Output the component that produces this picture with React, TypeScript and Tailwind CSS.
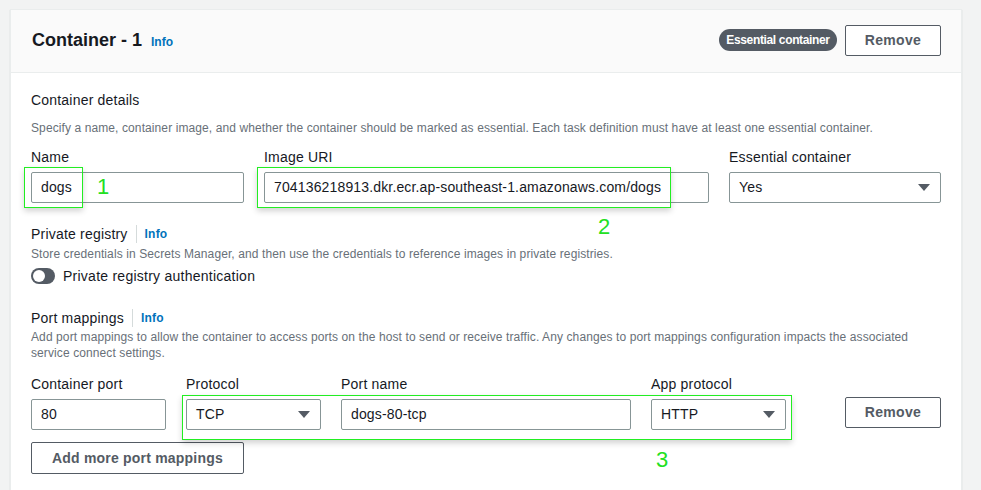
import React from 'react';

const font = { fontFamily: '"Liberation Sans", Arial, sans-serif' };

function Caret() {
  return (
    <svg width="12" height="7" viewBox="0 0 12 7" className="shrink-0">
      <path d="M0 0 H12 L6 7 Z" fill="#545b64" />
    </svg>
  );
}

function Label({ children }: { children: React.ReactNode }) {
  return <div className="text-[14px] leading-[20px] tracking-[0.2px] text-[#16191f] mb-[5px]">{children}</div>;
}

function TextBox({ value, className = '' }: { value: string; className?: string }) {
  return (
    <div
      className={`h-[31px] border border-[#879596] rounded-[2px] bg-white flex items-center px-[9px] text-[14px] tracking-[0.15px] text-[#16191f] ${className}`}
    >
      {value}
    </div>
  );
}

function SelectBox({ value, className = '' }: { value: string; className?: string }) {
  return (
    <div
      className={`h-[31px] border border-[#879596] rounded-[2px] bg-white flex items-center justify-between pl-[9px] pr-[10px] text-[14px] tracking-[0.2px] text-[#16191f] ${className}`}
    >
      <span>{value}</span>
      <Caret />
    </div>
  );
}

function InfoLink() {
  return <span className="text-[12px] font-bold text-[#0073bb]">Info</span>;
}

function SectionHeading({ title }: { title: string }) {
  return (
    <div className="flex items-center text-[14px] leading-[20px] tracking-[0.2px] text-[#16191f]">
      <span>{title}</span>
      <span className="mx-[8px] h-[18px] w-px bg-[#d5dbdb]" />
      <InfoLink />
    </div>
  );
}

function Marker({ n, className }: { n: string; className: string }) {
  return <span className={`absolute text-[22px] leading-none text-[#22e022] ${className}`}>{n}</span>;
}

function Highlight({ className }: { className: string }) {
  return (
    <div
      className={`absolute border border-[#22ee22] shadow-[0_3px_6px_rgba(0,0,0,0.18)] pointer-events-none ${className}`}
    />
  );
}

export default function App() {
  return (
    <div style={font} className="w-[981px] h-[490px] overflow-hidden bg-[#f2f3f3] pt-[9px] pl-[10px]">
      <div className="relative w-[952px] h-[600px] bg-white border border-[#eaeded] shadow-[0_1px_1px_rgba(0,28,36,0.2)]">
        <header className="h-[63px] bg-[#fafafa] border-b border-[#eaeded] flex items-center justify-between pl-[21px] pr-[20px] pb-[2px]">
          <div className="flex items-baseline gap-[9px]">
            <h2 className="text-[18px] font-bold text-[#16191f]">Container - 1</h2>
            <InfoLink />
          </div>
          <div className="flex items-center gap-[8px]">
            <span className="h-[22px] w-[118px] justify-center rounded-full bg-[#545b64] text-white text-[12px] font-bold tracking-[-0.35px] flex items-center">
              Essential container
            </span>
            <button className="w-[96px] h-[31px] border border-[#545b64] rounded-[2px] bg-white text-[14px] font-bold tracking-[0.3px] text-[#545b64]">
              Remove
            </button>
          </div>
        </header>

        <div className="px-[20px] pt-[17px]">
          <div className="text-[14px] leading-[20px] tracking-[0.2px] text-[#16191f]">Container details</div>
          <p className="mt-[10px] text-[12px] leading-[16px] tracking-[0.1px] text-[#687078]">
            Specify a name, container image, and whether the container should be marked as essential. Each task
            definition must have at least one essential container.
          </p>

          <div className="mt-[11px] flex gap-[20px]">
            <div className="w-[213px]">
              <Label>Name</Label>
              <TextBox value="dogs" />
            </div>
            <div className="w-[445px]">
              <Label>Image URI</Label>
              <TextBox value="704136218913.dkr.ecr.ap-southeast-1.amazonaws.com/dogs" />
            </div>
            <div className="w-[212px]">
              <Label>Essential container</Label>
              <SelectBox value="Yes" />
            </div>
          </div>

          <div className="mt-[21px]">
            <SectionHeading title="Private registry" />
            <p className="mt-[2px] text-[12px] leading-[16px] tracking-[0.1px] text-[#687078]">
              Store credentials in Secrets Manager, and then use the credentials to reference images in private
              registries.
            </p>
            <div className="mt-[4px] flex items-center gap-[8px]">
              <span className="w-[24px] h-[16px] rounded-full bg-[#545b64] flex items-center pl-[2px]">
                <span className="w-[12px] h-[12px] rounded-full bg-white" />
              </span>
              <span className="text-[14px] leading-[20px] tracking-[0.25px] text-[#16191f]">
                Private registry authentication
              </span>
            </div>
          </div>

          <div className="mt-[22px]">
            <SectionHeading title="Port mappings" />
            <p className="mt-[1px] text-[12px] leading-[16px] tracking-[0.1px] text-[#687078]">
              Add port mappings to allow the container to access ports on the host to send or receive traffic. Any
              changes to port mappings configuration impacts the associated service connect settings.
            </p>

            <div className="mt-[13px] flex items-end">
              <div className="flex gap-[20px]">
                <div className="w-[135px]">
                  <Label>Container port</Label>
                  <TextBox value="80" />
                </div>
                <div className="w-[135px]">
                  <Label>Protocol</Label>
                  <SelectBox value="TCP" />
                </div>
                <div className="w-[290px]">
                  <Label>Port name</Label>
                  <TextBox value="dogs-80-tcp" />
                </div>
                <div className="w-[135px]">
                  <Label>App protocol</Label>
                  <SelectBox value="HTTP" />
                </div>
              </div>
              <button className="ml-auto mb-[2px] w-[96px] h-[31px] border border-[#545b64] rounded-[2px] bg-white text-[14px] font-bold tracking-[0.3px] text-[#545b64]">
                Remove
              </button>
            </div>

            <button className="mt-[12px] w-[213px] h-[32px] border border-[#545b64] rounded-[2px] bg-white text-[14px] font-bold tracking-[0.2px] text-[#545b64]">
              Add more port mappings
            </button>
          </div>
        </div>

        <Highlight className="left-[13px] top-[157px] w-[59px] h-[41px]" />
        <Marker n="1" className="left-[86px] top-[166px]" />
        <Highlight className="left-[246px] top-[157px] w-[414px] h-[41px]" />
        <Marker n="2" className="left-[587px] top-[206px]" />
        <Highlight className="left-[171px] top-[385px] w-[610px] h-[45px]" />
        <Marker n="3" className="left-[645px] top-[439px]" />
      </div>
    </div>
  );
}
